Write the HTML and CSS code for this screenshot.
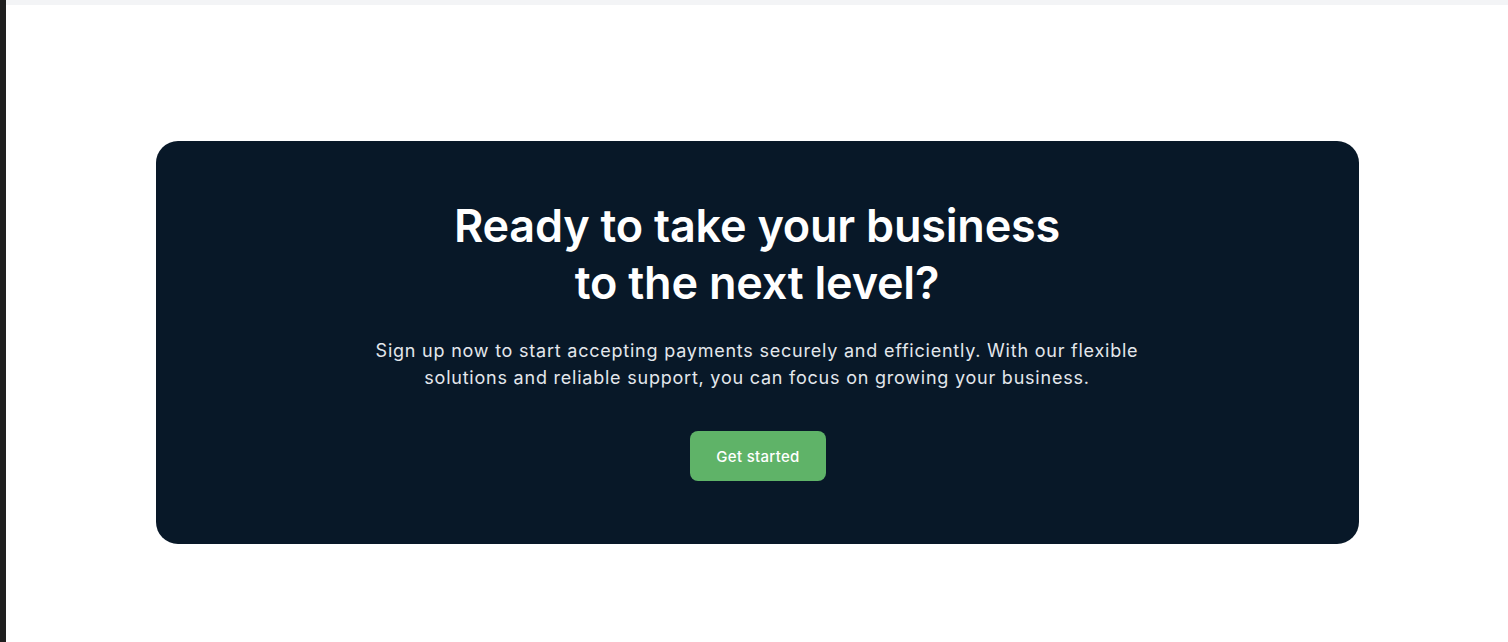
FILE: index.html
```html
<!DOCTYPE html>
<html>
<head>
<meta charset="utf-8">
<link rel="stylesheet" href="styles.css">
</head>
<body>
<div class="frame">
  <div class="edge"></div>
  <div class="page">
    <div class="topbar"></div>
    <main class="main">
      <section class="cta">
        <h1 class="cta-title">Ready to take your business<br>to the next level?</h1>
        <p class="cta-text">Sign up now to start accepting payments securely and efficiently. With our flexible<br>solutions and reliable support, you can focus on growing your business.</p>
        <a class="cta-btn" href="#">Get started</a>
      </section>
    </main>
  </div>
</div>
</body>
</html>
```
FILE: styles.css
```css
* { box-sizing: border-box; }
html, body { margin: 0; padding: 0; background: #ffffff; }
body { font-family: Inter, "Noto Sans", sans-serif; }
.frame { display: flex; height: 642px; }
.edge { width: 6px; background: #1f1f1f; flex: none; }
.page { flex: 1; display: flex; flex-direction: column; background: #ffffff; }
.topbar { height: 5px; background: #f3f4f6; flex: none; }
.main { padding-top: 136px; display: flex; justify-content: center; }
.cta {
  width: 1203px;
  height: 403px;
  background: #081828;
  border-radius: 22px;
  display: flex;
  flex-direction: column;
  align-items: center;
  padding-top: 56px;
  text-align: center;
}
.cta-title {
  margin: 0;
  color: #ffffff;
  font-size: 45px;
  line-height: 57px;
  font-weight: 600;
  letter-spacing: -0.005em;
}
.cta-text {
  margin: 26px 0 0;
  color: #e3e7ec;
  font-size: 18px;
  line-height: 27px;
  font-weight: 400;
  letter-spacing: 0.043em;
}
.cta-btn {
  margin: 40px 0 0 2px;
  display: flex;
  align-items: center;
  justify-content: center;
  width: 136px;
  height: 50px;
  border-radius: 8px;
  background: #5fb368;
  color: #ffffff;
  font-size: 15px;
  font-weight: 500;
  text-decoration: none;
  letter-spacing: 0.02em;
}
```
